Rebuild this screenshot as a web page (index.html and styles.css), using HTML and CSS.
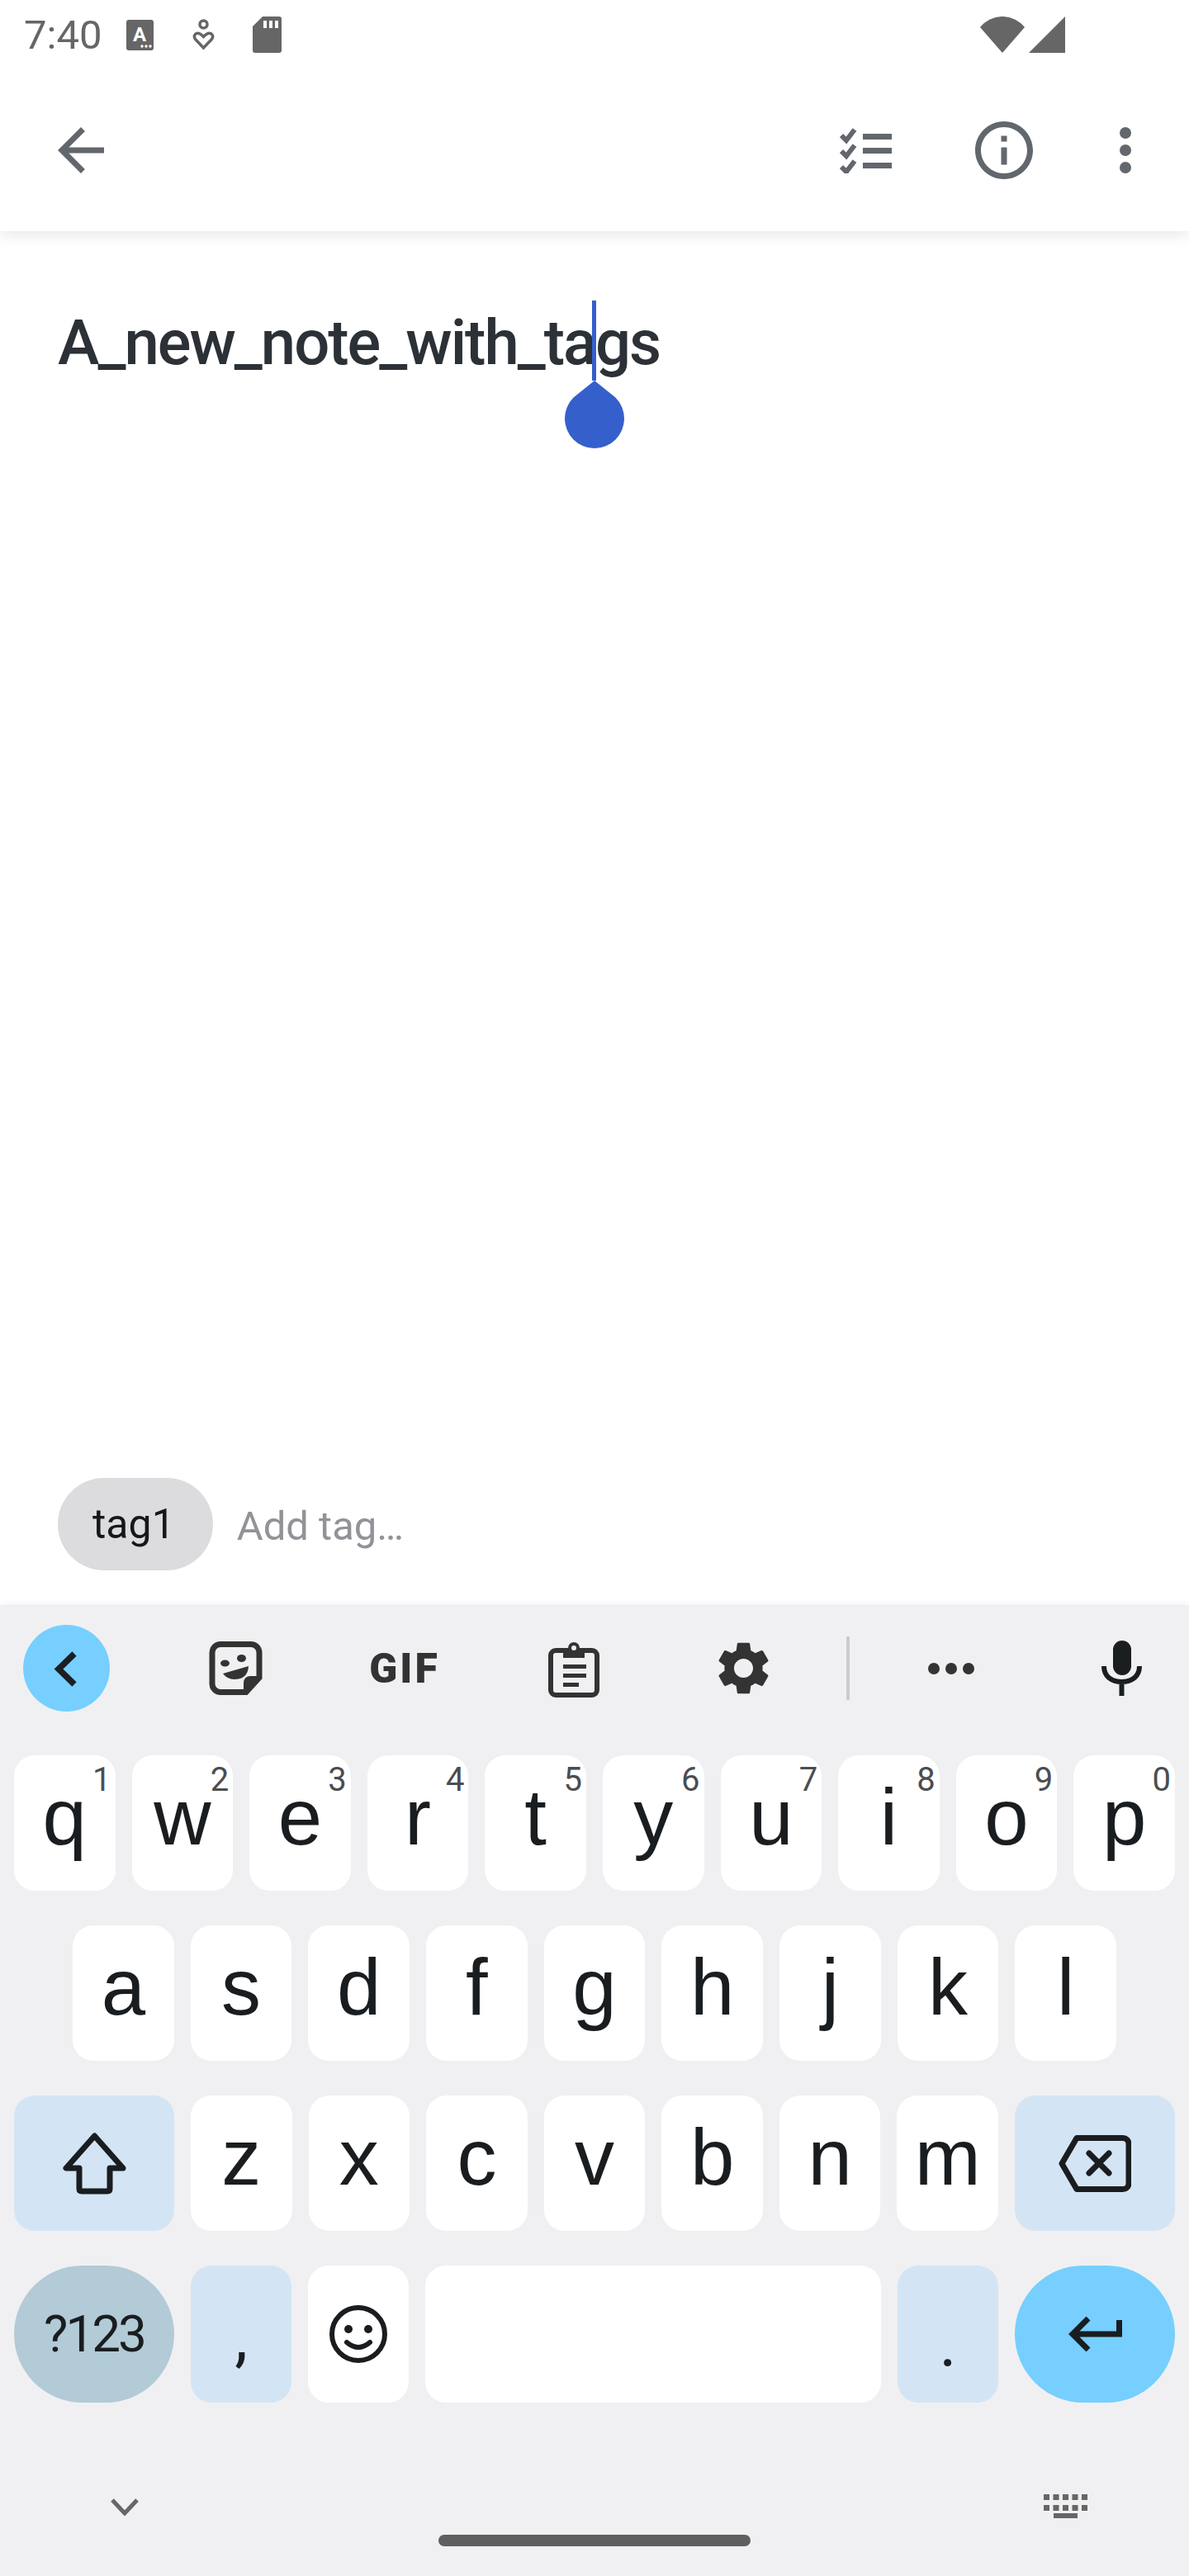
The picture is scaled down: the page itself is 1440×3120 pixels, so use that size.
FILE: index.html
```html
<!DOCTYPE html>
<html lang="en">
<head>
    <meta charset="UTF-8">
    <title>Note</title>
    <link rel="stylesheet" href="styles.css">
</head>
<body>
<header class="top">
    <div class="status">
        <span class="clock">7:40</span>
        <svg class="st-a" width="33" height="37" viewBox="0 0 33 37"><rect width="33" height="37" rx="3" fill="#666"/><text x="16" y="26" class="st-a-letter">A</text><circle cx="19" cy="32" r="1.7" fill="#fff"/><circle cx="24" cy="32" r="1.7" fill="#fff"/><circle cx="29" cy="32" r="1.7" fill="#fff"/></svg>
        <svg class="st-heart" width="27" height="38" viewBox="0 0 27 38"><g fill="none" stroke="#666" stroke-width="3.5"><circle cx="13.5" cy="6.5" r="4.5"/><path d="M13.5 35 3.5 24.5Q1 20.500 4 18 8 15.500 13.500 21.500 19 15.500 23 18 26 20.500 23.500 24.500Z"/></g></svg>
        <svg class="st-sd" width="35" height="44" viewBox="0 0 35 44"><path d="M12 0H32a3 3 0 0 1 3 3V41a3 3 0 0 1-3 3H3a3 3 0 0 1-3-3V12Z" fill="#666"/><path d="M13 5h4v9h-4zM20 5h4v9h-4zM27 5h4v9h-4z" fill="#fff"/></svg>
        <svg class="st-wifi" width="54" height="44" viewBox="0 0 54 44"><path d="M0 13A34.500 34.500 0 0 1 54 13L27 44Z" fill="#666"/></svg>
        <svg class="st-signal" width="44" height="44" viewBox="0 0 44 44"><path d="M44 0V44H0Z" fill="#666"/></svg>
    </div>
    <div class="appbar">
        <svg class="ic-back" width="84" height="84" viewBox="0 0 24 24"><path d="M20 11H7.830l5.590-5.590L12 4l-8 8 8 8 1.410-1.410L7.830 13H20v-2z" fill="#62676d"/></svg>
        <svg class="ic-check" width="63" height="55" viewBox="0 0 63 55"><g fill="#62676d"><path d="M28 7h35v7H28zM28 24h35v7H28zM28 42h35v7H28z"/></g><g fill="none" stroke="#62676d" stroke-width="6"><path d="M2 9l6 6L18 2"/><path d="M2 28l6 6L18 21"/><path d="M2 47l6 6L18 40"/></g></svg>
        <svg class="ic-info" width="84" height="84" viewBox="0 0 24 24"><path d="M11 7h2v2h-2zm0 4h2v6h-2zm1-9C6.480 2 2 6.480 2 12s4.480 10 10 10 10-4.480 10-10S17.520 2 12 2zm0 18c-4.410 0-8-3.590-8-8s3.590-8 8-8 8 3.590 8 8-3.590 8-8 8z" fill="#62676d"/></svg>
        <svg class="ic-more" width="84" height="84" viewBox="0 0 24 24"><g fill="#62676d"><circle cx="12" cy="6" r="2"/><circle cx="12" cy="12" r="2"/><circle cx="12" cy="18" r="2"/></g></svg>
    </div>
</header>

<main class="note">
    <h1 class="note-title">A_new_note_with_tags</h1>
    <span class="caret"></span>
    <svg class="handle" width="72" height="82" viewBox="0 0 72 82"><path d="M36 0 10.500 20.500A36 36 0 1 0 61.500 20.500Z" fill="#3560cb"/></svg>
</main>

<section class="tags">
    <span class="chip">tag1</span>
    <span class="add-tag">Add tag…</span>
</section>

<section class="kb">
    <div class="tools">
        <div class="tools-left">
            <div class="tool">
                <svg width="105" height="105" viewBox="0 0 105 105"><circle cx="52.500" cy="52.500" r="52.500" fill="#76cfff"/><path d="M62 35 43 53.500 62 72" fill="none" stroke="#1b1f22" stroke-width="7.500"/></svg>
            </div>
            <div class="tool">
                <svg width="65" height="65" viewBox="0 0 65 65"><path d="M14 3.500H51a10 10 0 0 1 10 10V44L45 61.500H14a10 10 0 0 1-10-10V13.500a10 10 0 0 1 10-10Z" fill="none" stroke="#333" stroke-width="7"/><path d="M63 42H50a8 8 0 0 0-8 8V64Z" fill="#333"/><ellipse cx="19.500" cy="26.500" rx="5.500" ry="4" fill="#333"/><ellipse cx="39.500" cy="20.500" rx="5.500" ry="4.500" fill="#333"/><path d="M17 39 48 30Q47 46 31 46 22 46 17 39Z" fill="#333"/></svg>
            </div>
            <div class="tool"><span class="gif">GIF</span></div>
            <div class="tool">
                <svg width="62" height="70" viewBox="0 0 62 70"><rect x="3" y="13" width="56" height="54" rx="6" fill="none" stroke="#333" stroke-width="6"/><path d="M18 22V10H24A7 7 0 0 1 38 10H44V22Z" fill="#333"/><circle cx="31" cy="10" r="3" fill="#f0f0f2"/><path d="M18 30h28v5H18zM18 41h28v5H18zM18 52h19v5H18z" fill="#333"/></svg>
            </div>
            <div class="tool">
                <svg width="77" height="77" viewBox="0 0 24 24"><path d="M19.140 12.940c.04-.3.06-.61.06-.94 0-.32-.02-.64-.07-.94l2.030-1.580c.18-.14.23-.41.12-.61l-1.920-3.320c-.12-.22-.37-.29-.59-.22l-2.390.96c-.5-.38-1.030-.7-1.620-.94l-.36-2.540c-.04-.24-.24-.41-.48-.41h-3.840c-.24 0-.43.17-.47.41l-.36 2.540c-.59.24-1.130.57-1.620.94l-2.390-.96c-.22-.08-.47 0-.59.22L2.740 8.870c-.12.21-.08.47.12.61l2.030 1.580c-.05.3-.09.63-.09.94s.02.64.07.94l-2.030 1.580c-.18.14-.23.41-.12.61l1.920 3.320c.12.22.37.29.59.22l2.390-.96c.5.38 1.030.7 1.620.94l.36 2.540c.05.24.24.41.48.41h3.840c.24 0 .44-.17.47-.41l.36-2.540c.59-.24 1.130-.56 1.620-.94l2.390.96c.22.08.47 0 .59-.22l1.920-3.320c.12-.22.07-.47-.12-.61l-2.010-1.580zM12 15.600c-1.980 0-3.600-1.620-3.600-3.600s1.620-3.600 3.600-3.600 3.600 1.620 3.600 3.600-1.620 3.600-3.600 3.600z" fill="#333"/></svg>
            </div>
        </div>
        <div class="tools-right">
            <span class="tools-divider"></span>
            <svg class="tools-more" width="56" height="14" viewBox="0 0 56 14"><g fill="#333"><circle cx="7" cy="7" r="7"/><circle cx="28" cy="7" r="7"/><circle cx="49" cy="7" r="7"/></g></svg>
            <svg width="49" height="67" viewBox="0 0 49 67"><rect x="14" y="0" width="22" height="42" rx="11" fill="#1b1e20"/><path d="M3 31C3 44 13 50 24.500 50 36 50 46 44 46 31M24.500 50V67" fill="none" stroke="#1b1e20" stroke-width="6"/></svg>
        </div>
    </div>

    <div class="keys">
        <div class="row">
            <div class="key">q<sup class="hint">1</sup></div>
            <div class="key">w<sup class="hint">2</sup></div>
            <div class="key">e<sup class="hint">3</sup></div>
            <div class="key">r<sup class="hint">4</sup></div>
            <div class="key">t<sup class="hint">5</sup></div>
            <div class="key">y<sup class="hint">6</sup></div>
            <div class="key">u<sup class="hint">7</sup></div>
            <div class="key">i<sup class="hint">8</sup></div>
            <div class="key">o<sup class="hint">9</sup></div>
            <div class="key">p<sup class="hint">0</sup></div>
        </div>
        <div class="row row-home">
            <div class="key">a</div>
            <div class="key">s</div>
            <div class="key">d</div>
            <div class="key">f</div>
            <div class="key">g</div>
            <div class="key">h</div>
            <div class="key">j</div>
            <div class="key">k</div>
            <div class="key">l</div>
        </div>
        <div class="row">
            <div class="key key-wide key-icon key-mod">
                <svg width="79" height="76" viewBox="0 0 79 76"><path d="M39.500 5 5 44H21V69Q21 72 24 72H55Q58 72 58 69V44H74Z" fill="none" stroke="#1a1d20" stroke-width="7" stroke-linejoin="round"/></svg>
            </div>
            <div class="key">z</div>
            <div class="key">x</div>
            <div class="key">c</div>
            <div class="key">v</div>
            <div class="key">b</div>
            <div class="key">n</div>
            <div class="key">m</div>
            <div class="key key-wide key-icon key-mod">
                <svg width="88" height="69" viewBox="0 0 88 69"><path d="M22 3.500H78a7 7 0 0 1 7 7V58.500a7 7 0 0 1-7 7H22L4 34.500Z" fill="none" stroke="#1a1d20" stroke-width="7" stroke-linejoin="round"/><path d="M37 22 61 46M61 22 37 46" fill="none" stroke="#1a1d20" stroke-width="7" stroke-linecap="round"/></svg>
            </div>
        </div>
        <div class="row row-bottom">
            <div class="key key-wide key-sym">?123</div>
            <div class="key key-mod key-comma">,</div>
            <div class="key key-icon">
                <svg width="70" height="70" viewBox="0 0 70 70"><circle cx="35" cy="35" r="32" fill="none" stroke="#1a1d20" stroke-width="6"/><circle cx="23" cy="29" r="5" fill="#1a1d20"/><circle cx="47" cy="29" r="5" fill="#1a1d20"/><path d="M21 45Q35 57 49 45" fill="none" stroke="#1a1d20" stroke-width="6" stroke-linecap="round"/></svg>
            </div>
            <div class="key key-icon key-space"></div>
            <div class="key key-mod key-period">.</div>
            <div class="key key-wide key-icon key-enter">
                <svg width="65" height="42" viewBox="0 0 65 42"><path d="M61.500 4V21H6M24 2 5 21 24 40" fill="none" stroke="#1a1d20" stroke-width="7"/></svg>
            </div>
        </div>
    </div>

    <div class="nav">
        <svg class="nav-down" width="34" height="21" viewBox="0 0 34 21"><path d="M2 2 17 18 32 2" fill="none" stroke="#666" stroke-width="5"/></svg>
        <span class="nav-home"></span>
        <svg class="nav-kb" width="53" height="29" viewBox="0 0 53 29"><path d="M0 0h7v7H0zM11.500 0h7v7h-7zM23 0h7v7h-7zM34.500 0h7v7h-7zM46 0h7v7h-7zM0 13h7v7H0zM11.500 13h7v7h-7zM23 13h7v7h-7zM34.500 13h7v7h-7zM46 13h7v7h-7zM12 23h29v6H12z" fill="#666"/></svg>
    </div>
</section>
</body>
</html>
```

FILE: styles.css
```css
html, body {
    margin: 0;
    height: 100%;
}

body {
    display: flex;
    flex-direction: column;
    height: 3120px;
    background-color: #fff;
    font-family: Roboto, sans-serif;
    color: #1a1d20;
}

svg {
    display: block;
    flex: none;
}

/* status bar + app bar */
.top {
    position: relative;
    z-index: 1;
    background-color: #fff;
    box-shadow: 0 4px 18px rgba(0, 0, 0, 0.1);
}

.status {
    display: flex;
    align-items: center;
    height: 84px;
    padding: 0 150px 0 29px;
}

.clock {
    font-size: 49px;
    color: #666;
    width: 93px;
}

.st-a {
    margin-left: 31px;
}

.st-a-letter {
    font-family: Roboto, sans-serif;
    font-size: 24px;
    font-weight: 700;
    fill: #fff;
    text-anchor: middle;
}

.st-heart {
    margin-left: 47px;
}

.st-sd {
    margin-left: 46px;
}

.st-wifi {
    margin-left: auto;
}

.st-signal {
    margin-left: 5px;
}

.appbar {
    display: flex;
    align-items: center;
    height: 196px;
    padding: 0 35px 0 56px;
}

.ic-check {
    margin-left: auto;
}

.ic-info {
    margin-left: 94px;
}

.ic-more {
    margin-left: 63px;
}

/* note body */
.note {
    position: relative;
    flex: 1 1 auto;
    padding: 0 70px;
}

.note-title {
    margin: 0;
    padding-top: 85px;
    font-size: 76px;
    line-height: 100px;
    font-weight: 500;
    letter-spacing: -2px;
    color: #2b3136;
}

.caret {
    position: absolute;
    left: 717px;
    top: 84px;
    width: 5px;
    height: 97px;
    background-color: #3560cb;
}

.handle {
    position: absolute;
    left: 684px;
    top: 181px;
}

.tags {
    display: flex;
    align-items: center;
    gap: 29px;
    padding: 0 70px 42px;
}

.chip {
    display: flex;
    align-items: center;
    height: 112px;
    padding: 0 46px 0 42px;
    border-radius: 56px;
    background-color: #dcdcde;
    font-size: 50px;
    color: #14181b;
}

.add-tag {
    padding-top: 4px;
    font-size: 49px;
    color: #919398;
}

/* keyboard */
.kb {
    background-color: #f0f0f2;
    box-shadow: 0 -2px 8px rgba(0, 0, 0, 0.05);
}

.tools {
    display: flex;
    height: 182px;
    padding: 24px 57px 0 30px;
    box-sizing: border-box;
}

.tools-left {
    display: flex;
    gap: 105px;
    height: 105px;
}

.tool {
    display: flex;
    align-items: center;
    justify-content: center;
    width: 100px;
    height: 105px;
}

.gif {
    font-size: 50px;
    font-weight: 900;
    letter-spacing: 3px;
    color: #333;
}

.tools-right {
    display: flex;
    align-items: center;
    height: 105px;
    margin-left: auto;
}

.tools-divider {
    width: 4px;
    height: 77px;
    background-color: #ccc;
}

.tools-more {
    margin: 0 154px 0 95px;
}

.keys {
    display: flex;
    flex-direction: column;
    gap: 42px;
    padding: 0 17px;
}

.row {
    display: flex;
    gap: 20px;
    height: 164px;
}

.row-home {
    padding: 0 71px;
}

.row-bottom {
    height: 166px;
}

.key {
    position: relative;
    display: flex;
    align-items: center;
    justify-content: center;
    flex: 1 1 0;
    box-sizing: border-box;
    padding-bottom: 14px;
    border-radius: 25px;
    background-color: #fff;
    font-family: "Liberation Sans", Roboto, sans-serif;
    font-size: 96px;
    line-height: 1;
}

.key-icon {
    padding-bottom: 0;
}

.key-wide {
    flex: 0 0 194px;
}

.key-mod {
    background-color: #d3e5f4;
}

.key-space {
    flex: 0 0 552px;
}

.key-sym {
    padding-bottom: 0;
    border-radius: 83px;
    background-color: #b3cad7;
    font-family: Roboto, sans-serif;
    font-size: 62px;
    letter-spacing: -3px;
}

.key-enter {
    border-radius: 83px;
    background-color: #76cfff;
}

.key-comma {
    padding: 8px 0 0;
    font-family: Roboto, sans-serif;
    font-size: 80px;
}

.key-period {
    padding: 24px 0 0;
    font-family: Roboto, sans-serif;
    font-size: 80px;
}

.hint {
    position: absolute;
    top: 6px;
    right: 5px;
    font-family: Roboto, sans-serif;
    font-size: 40px;
    line-height: 47px;
    color: #4b4d50;
}

.nav {
    display: flex;
    justify-content: space-between;
    height: 210px;
    padding: 0 123px 0 134px;
}

.nav-down {
    margin-top: 116px;
}

.nav-home {
    width: 378px;
    height: 14px;
    margin-top: 160px;
    margin-left: 8px;
    border-radius: 7px;
    background-color: #5f5f5f;
}

.nav-kb {
    margin-top: 111px;
}
```
